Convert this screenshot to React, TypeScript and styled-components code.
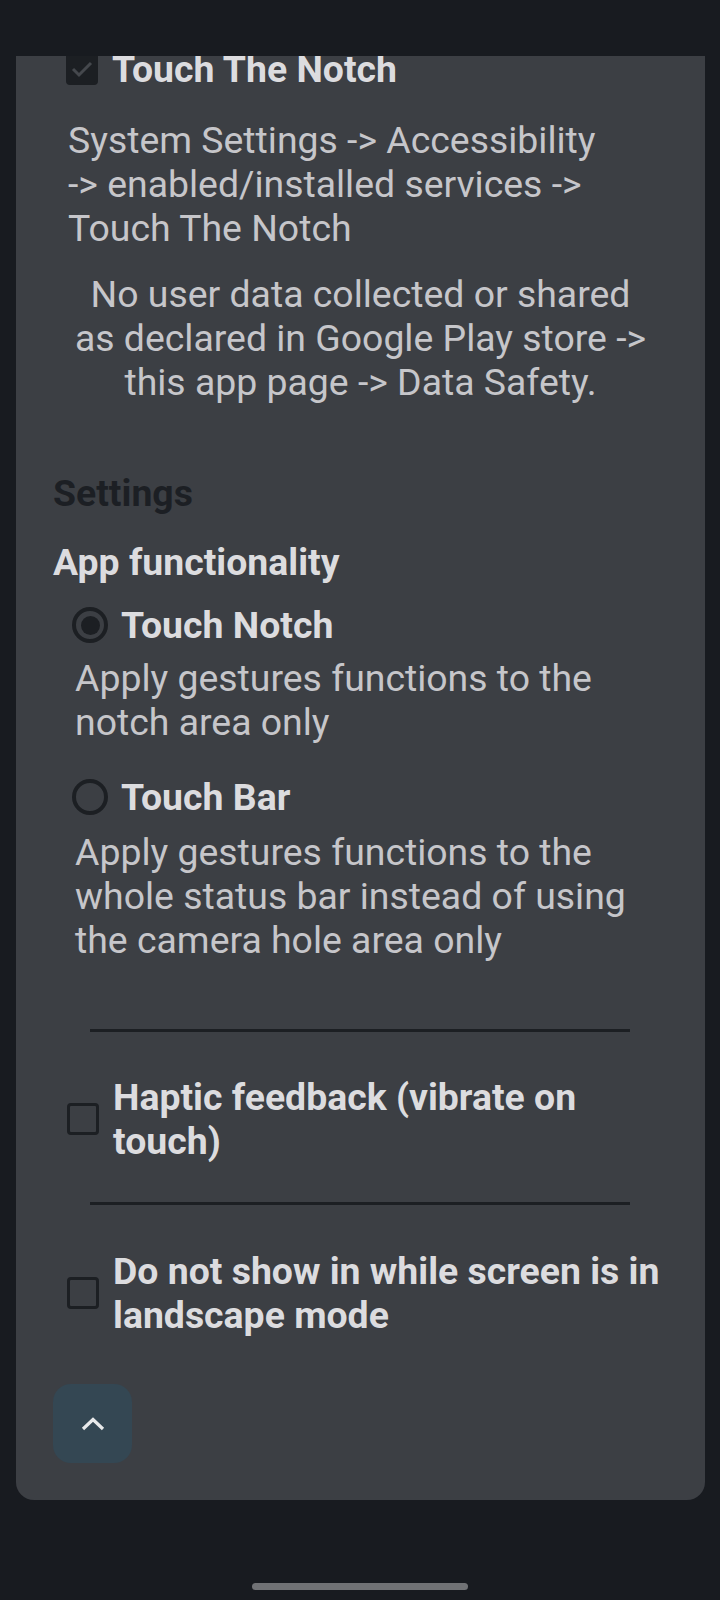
import React from "react";
import styled, { createGlobalStyle } from "styled-components";

const GlobalStyle = createGlobalStyle`
  html, body {
    margin: 0;
    padding: 0;
    background: #181b20;
  }
  body {
    font-family: Roboto, "Noto Sans", "Liberation Sans", sans-serif;
  }
`;

const Screen = styled.div`
  width: 720px;
  height: 1600px;
  background: #181b20;
  display: flex;
  flex-direction: column;
  overflow: hidden;
`;

const TopSpace = styled.div`
  height: 56px;
  flex: none;
`;

const Card = styled.main`
  margin: 0 15px 0 16px;
  height: 1444px;
  box-sizing: border-box;
  background: #3c3f44;
  border-radius: 0 0 18px 18px;
  overflow: hidden;
  display: flex;
  flex-direction: column;
  padding-bottom: 37px;
`;

const CheckRow = styled.label<{ $top: number; $left: number }>`
  display: flex;
  align-items: center;
  gap: 14px;
  margin-top: ${(p) => p.$top}px;
  padding-left: ${(p) => p.$left}px;
  padding-right: 16px;
`;

const Box = styled.span<{ $checked?: boolean }>`
  flex: none;
  width: 32px;
  height: 32px;
  box-sizing: border-box;
  border-radius: 4px;
  border: 3.5px solid #1c1f23;
  background: ${(p) => (p.$checked ? "#1c1f23" : "transparent")};
  display: flex;
  align-items: center;
  justify-content: center;
`;

const BoldLabel = styled.span`
  font-size: 37.4px;
  line-height: 44px;
  font-weight: 700;
  color: #dcdcdf;
  white-space: nowrap;
`;

const Para = styled.p<{ $top: number; $center?: boolean; $left: number; $right: number }>`
  margin: ${(p) => p.$top}px 0 0;
  padding: 0 ${(p) => p.$right}px 0 ${(p) => p.$left}px;
  font-size: 37.4px;
  line-height: 44px;
  color: #c6c6ca;
  white-space: nowrap;
  text-align: ${(p) => (p.$center ? "center" : "left")};
`;

const SectionTitle = styled.h2<{ $top: number; $dim?: boolean }>`
  margin: ${(p) => p.$top}px 0 0;
  padding-left: 37px;
  font-size: 37.4px;
  line-height: 44px;
  font-weight: 700;
  color: ${(p) => (p.$dim ? "#1c1f24" : "#dcdcdf")};
`;

const RadioRow = styled.label<{ $top: number }>`
  display: flex;
  align-items: center;
  gap: 13px;
  margin-top: ${(p) => p.$top}px;
  padding-left: 56px;
`;

const Radio = styled.span<{ $on?: boolean }>`
  flex: none;
  width: 36px;
  height: 36px;
  box-sizing: border-box;
  border-radius: 50%;
  border: 4px solid #1c1f23;
  display: flex;
  align-items: center;
  justify-content: center;
  &::after {
    content: "";
    width: 19px;
    height: 19px;
    border-radius: 50%;
    background: ${(p) => (p.$on ? "#1c1f23" : "transparent")};
  }
`;

const Divider = styled.hr<{ $top: number }>`
  margin: ${(p) => p.$top}px 0 0 74px;
  width: 540px;
  height: 3px;
  border: none;
  background: #1c1f23;
`;

const Spacer = styled.div`
  flex: 1;
`;

const UpButton = styled.button`
  margin-left: 37px;
  width: 79px;
  height: 79px;
  border: none;
  border-radius: 18px;
  background: #344753;
  display: flex;
  align-items: center;
  justify-content: center;
  padding: 0;
`;

const HomeBar = styled.div`
  margin: 83px auto 0;
  width: 216px;
  height: 7px;
  border-radius: 4px;
  background: #707275;
`;

const Check = () => (
  <svg width="22" height="18" viewBox="0 0 22 18">
    <path d="M2 9 L8 15 L20 3" fill="none" stroke="#45484d" strokeWidth="3" />
  </svg>
);

const Chevron = () => (
  <svg width="24" height="14" viewBox="0 0 24 14">
    <path d="M2 12 L12 2.5 L22 12" fill="none" stroke="#e8e9ea" strokeWidth="3.2" />
  </svg>
);

export default function App() {
  return (
    <Screen>
      <GlobalStyle />
      <TopSpace />
      <Card>
        <CheckRow $top={-9} $left={50}>
          <Box $checked>
            <Check />
          </Box>
          <BoldLabel>Touch The Notch</BoldLabel>
        </CheckRow>
        <Para $top={27} $left={52} $right={40}>
          System Settings -&gt; Accessibility
          <br />
          -&gt; enabled/installed services -&gt;
          <br />
          Touch The Notch
        </Para>
        <Para $top={22} $left={30} $right={30} $center>
          No user data collected or shared
          <br />
          as declared in Google Play store -&gt;
          <br />
          this app page -&gt; Data Safety.
        </Para>
        <SectionTitle $top={67} $dim>
          Settings
        </SectionTitle>
        <SectionTitle $top={25}>App functionality</SectionTitle>
        <RadioRow $top={19}>
          <Radio $on />
          <BoldLabel>Touch Notch</BoldLabel>
        </RadioRow>
        <Para $top={9} $left={59} $right={30}>
          Apply gestures functions to the
          <br />
          notch area only
        </Para>
        <RadioRow $top={31}>
          <Radio />
          <BoldLabel>Touch Bar</BoldLabel>
        </RadioRow>
        <Para $top={11} $left={59} $right={30}>
          Apply gestures functions to the
          <br />
          whole status bar instead of using
          <br />
          the camera hole area only
        </Para>
        <Divider $top={67} />
        <CheckRow $top={43} $left={51}>
          <Box />
          <BoldLabel>
            Haptic feedback (vibrate on
            <br />
            touch)
          </BoldLabel>
        </CheckRow>
        <Divider $top={39} />
        <CheckRow $top={44} $left={51}>
          <Box />
          <BoldLabel>
            Do not show in while screen is in
            <br />
            landscape mode
          </BoldLabel>
        </CheckRow>
        <Spacer />
        <UpButton aria-label="Scroll to top">
          <Chevron />
        </UpButton>
      </Card>
      <HomeBar />
    </Screen>
  );
}
